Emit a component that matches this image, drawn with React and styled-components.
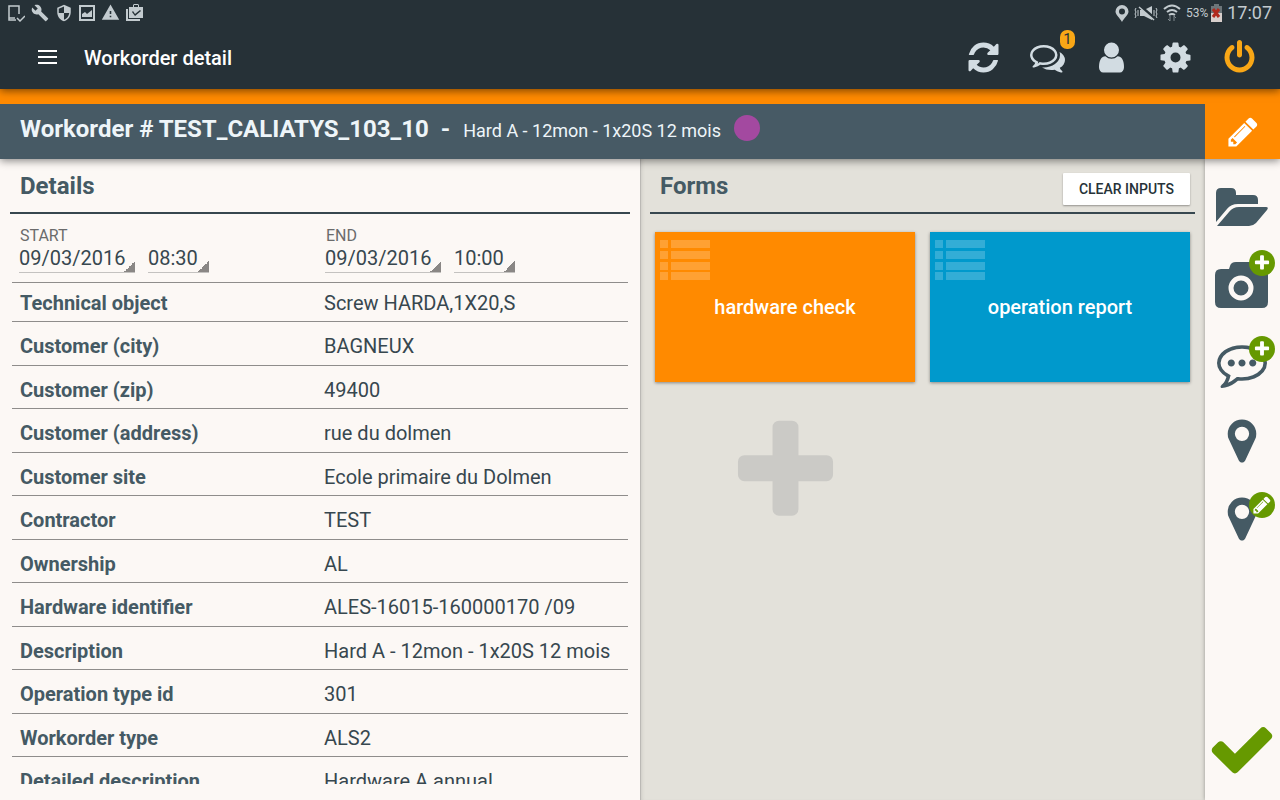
import React, { useState } from 'react';
import styled, { createGlobalStyle } from 'styled-components';
import { MdBuild, MdSecurity, MdWarning } from 'react-icons/md';

const GlobalStyle = createGlobalStyle`
  * {
    box-sizing: border-box;
  }

  body {
    margin: 0;
    background-color: #fcf8f5;
    color: #37474f;
    font-family: Roboto, 'Liberation Sans', sans-serif;
  }

  button, select {
    font-family: inherit;
  }
`

const Screen = styled.div`
  display: flex;
  flex-direction: column;
  height: 100vh;
`

const Header = styled.header`
  position: relative;
  z-index: 3;
  background-color: #263137;
  box-shadow: 0 2px 8px rgba(0, 0, 0, 0.5);
`

const StatusBar = styled.div`
  display: flex;
  align-items: center;
  justify-content: space-between;
  height: 25px;
  padding: 0 8px 0 6px;
  color: #c3cbcf;
`

const StatusGroup = styled.div`
  display: flex;
  align-items: center;
  gap: ${props => props.gap};
`

const Battery = styled.span`
  font-size: 12px;
  margin-right: -2px;
`

const Clock = styled.span`
  font-size: 18px;
  line-height: 25px;
`

const AppBar = styled.div`
  display: flex;
  align-items: center;
  height: 64px;
  padding: 0 9px 0 28px;
`

const AppTitle = styled.h1`
  flex: 1;
  margin: 0 0 0 16px;
  padding-top: 2px;
  color: #fff;
  font-size: 20px;
  font-weight: 500;
`

const IconButton = styled.button`
  position: relative;
  display: flex;
  align-items: center;
  justify-content: center;
  width: ${props => props.width || '64px'};
  height: 64px;
  padding: 0;
  border: none;
  background: none;
  color: ${props => props.color || '#d2dce2'};
  cursor: pointer;
`

const Count = styled.span`
  position: absolute;
  top: 5px;
  right: 4px;
  width: 15px;
  border-radius: 7px;
  background-color: #f9a716;
  color: #263137;
  font-size: 15px;
  line-height: 19px;
  text-align: center;
`

const TitleRow = styled.div`
  position: relative;
  z-index: 2;
  display: flex;
  padding-top: 15px;
  background-color: #ff8a00;
  box-shadow: 0 2px 8px rgba(0, 0, 0, 0.45);
`

const TitleBar = styled.div`
  flex: 1;
  display: flex;
  align-items: center;
  height: 55px;
  padding: 0 20px 5px;
  background-color: #475a65;
  color: #eef5f9;
`

const OrderNumber = styled.h2`
  margin: 0;
  font-size: 24px;
  font-weight: 700;
  white-space: pre;
`

const OrderName = styled.span`
  margin: 2px 13px 0;
  font-size: 18px;
`

const Dot = styled.span`
  width: 26px;
  height: 26px;
  margin-top: -2px;
  border-radius: 50%;
  background-color: #a349a0;
`

const EditButton = styled.button`
  display: flex;
  align-items: center;
  justify-content: center;
  width: 75px;
  padding: 0;
  border: none;
  background: none;
  color: #fff;
  cursor: pointer;
`

const Main = styled.main`
  flex: 1;
  display: flex;
  min-height: 0;
`

const Details = styled.section`
  flex: 0 0 50%;
  display: flex;
  flex-direction: column;
  padding: 0 10px 16px;
`

const Forms = styled.section`
  flex: 1;
  padding: 0 10px;
  background-color: #e3e1da;
  box-shadow: inset 1px 0 #bbb9b5, inset 4px 0 4px -3px rgba(0, 0, 0, 0.15);
`

const PanelHead = styled.div`
  display: flex;
  align-items: center;
  justify-content: space-between;
  height: 55px;
  padding: 0 5px 0 10px;
  border-bottom: 2px solid #37474f;
`

const PanelTitle = styled.h3`
  margin: 0;
  padding-top: 1px;
  color: #455a64;
  font-size: 24px;
  font-weight: 700;
`

const ClearButton = styled.button`
  height: 32px;
  margin-top: 6px;
  padding: 0 16px;
  border: none;
  border-radius: 1px;
  background-color: #fff;
  box-shadow: 0 1px 2px rgba(0, 0, 0, 0.35);
  color: #263238;
  font-size: 14px;
  font-weight: 500;
  cursor: pointer;
`

const Scroll = styled.div`
  flex: 1;
  min-height: 0;
  padding: 0 2px;
  overflow: hidden;
`

const Dates = styled.div`
  display: grid;
  grid-template-columns: 306px 1fr;
  height: 69px;
  padding: 12px 7px 0;
  border-bottom: 1px solid #8f8d8b;
`

const DateLabel = styled.label`
  display: block;
  padding-left: 1px;
  color: #6b6b6b;
  font-size: 16px;
  line-height: 20px;
`

const Pickers = styled.div`
  display: flex;
  gap: 13px;
`

const Picker = styled.select`
  appearance: none;
  width: ${props => props.width};
  height: 27px;
  padding: 0 0 5px;
  border: none;
  border-bottom: 1px solid #c4c2c0;
  border-radius: 0;
  outline: none;
  background: linear-gradient(135deg, transparent 50%, #8a8785 50%) right bottom / 12px 12px no-repeat border-box;
  color: #37474f;
  font-size: 20px;
`

const Table = styled.table`
  width: 100%;
  border-spacing: 0;
  table-layout: fixed;
`

const Name = styled.th`
  width: 304px;
  padding: 5px 8px 0;
  border-bottom: 1px solid #8f8d8b;
  color: #455a64;
  font-size: 20px;
  font-weight: 700;
  line-height: 24px;
  text-align: left;
`

const Value = styled.td`
  padding: 5px 8px 0;
  border-bottom: 1px solid #8f8d8b;
  font-size: 20px;
  line-height: 24px;
`

const Row = styled.tr`
  height: 43px;

  &:nth-child(even) {
    height: 44px;
  }

  &:first-child {
    height: 39px;
  }

  &:first-child > * {
    padding-top: 2px;
  }
`

const Tiles = styled.div`
  display: grid;
  grid-template-columns: 1fr 1fr;
  grid-auto-rows: 150px;
  gap: 15px;
  padding: 18px 5px;
`

const Tile = styled.button`
  position: relative;
  border: none;
  background-color: ${props => props.color};
  box-shadow: 0 1px 3px rgba(0, 0, 0, 0.4);
  color: #fff;
  font-size: 20px;
  font-weight: 500;
  cursor: pointer;
`

const TileIcon = styled.svg`
  position: absolute;
  top: 8px;
  left: 5px;
`

const AddButton = styled.button`
  display: flex;
  align-items: center;
  justify-content: center;
  padding: 0;
  border: none;
  background: none;
  color: #cbcac6;
  cursor: pointer;
`

const Rail = styled.nav`
  display: flex;
  flex-direction: column;
  width: 75px;
  padding: 9px 0 12px;
  box-shadow: 0 0 4px rgba(0, 0, 0, 0.35);
`

const RailButton = styled.button`
  position: relative;
  display: flex;
  align-items: center;
  justify-content: center;
  height: 78px;
  padding: 0 2px 0 0;
  border: none;
  background: none;
  color: ${props => props.color || '#455a64'};
  cursor: pointer;

  &:last-child {
    margin-top: auto;
  }
`

const Badge = styled.span`
  position: absolute;
  top: ${props => props.top};
  right: 5px;
  display: flex;
  align-items: center;
  justify-content: center;
  width: 26px;
  height: 26px;
  border-radius: 50%;
  background-color: #669900;
  color: #fff;
`

const paths = {
  refresh: 'M1639 1056q0 5-1 7-64 268-268 434.5t-478 166.5q-146 0-282.5-55t-243.5-157l-129 129q-19 19-45 19t-45-19-19-45v-448q0-26 19-45t45-19h448q26 0 45 19t19 45-19 45l-137 137q71 66 161 102t187 36q134 0 250-65t186-179q11-17 53-117 8-23 30-23h192q13 0 22.5 9.5t9.5 22.5zm25-800v448q0 26-19 45t-45 19h-448q-26 0-45-19t-19-45 19-45l138-138q-148-137-349-137-134 0-250 65t-186 179q-11 17-53 117-8 23-30 23h-199q-13 0-22.5-9.5t-9.5-22.5v-7q65-268 270-434.5t480-166.5q146 0 284 55.5t245 156.5l130-129q19-19 45-19t45 19 19 45z',
  comments: 'M704 384q-153 0-286 52t-211.5 141-78.5 191q0 82 53 158t149 132l97 56-35 84q34-20 62-39l44-31 53 10q78 14 153 14 153 0 286-52t211.5-141 78.5-191-78.5-191-211.5-141-286-52zm0-128q191 0 353.5 68.5t256.5 186.5 94 257-94 257-256.5 186.5-353.5 68.5q-86 0-176-16-124 88-278 128-36 9-86 16h-3q-11 0-20.5-8t-11.5-21q-1-3-1-6.5t.5-6.5 2-6l2.5-5 3.5-5.5 4-5 4.5-5 4-4.5q5-6 23-25t26-29.5 22.5-29 25-38.5 20.5-44q-124-72-195-177t-71-224q0-139 94-257t256.5-186.5 353.5-68.5zm822 1169q10 24 20.5 44t25 38.5 22.5 29 26 29.5 23 25q1 1 4 4.5t4.5 5 4 5 3.5 5.5l2.5 5 2 6 .5 6.5-1 6.5q-3 14-13 22t-22 7q-50-7-86-16-154-40-278-128-90 16-176 16-271 0-472-132 58 4 88 4 161 0 309-45t264-129q125-92 192-212t67-254q0-77-23-152 129 71 204 178t75 230q0 120-71 224.5t-195 176.5z',
  user: 'M1536 1399q0 109-62.5 187t-150.5 78h-854q-88 0-150.5-78t-62.5-187q0-85 8.5-160.5t31.5-152 58.5-131 94-89 134.5-34.5q131 128 313 128t313-128q76 0 134.5 34.5t94 89 58.5 131 31.5 152 8.5 160.5zm-256-887q0 159-112.5 271.5t-271.5 112.5-271.5-112.5-112.5-271.5 112.5-271.5 271.5-112.5 271.5 112.5 112.5 271.5z',
  cog: 'M1152 896q0-106-75-181t-181-75-181 75-75 181 75 181 181 75 181-75 75-181zm512-109v222q0 12-8 23t-20 13l-185 28q-19 54-39 91 35 50 107 138 10 12 10 25t-9 23q-27 37-99 108t-94 71q-12 0-26-9l-138-108q-44 23-91 38-16 136-29 186-7 28-36 28h-222q-14 0-24.5-8.5t-11.5-21.5l-28-184q-49-16-90-37l-141 107q-10 9-25 9-14 0-25-11-126-114-165-168-7-10-7-23 0-12 8-23 15-21 51-66.5t54-70.5q-27-50-41-99l-183-27q-13-2-21-12.5t-8-23.5v-222q0-12 8-23t19-13l186-28q14-46 39-92-40-57-107-138-10-12-10-24 0-10 9-23 26-36 98.5-107.5t94.5-71.5q13 0 26 10l138 107q44-23 91-38 16-136 29-186 7-28 36-28h222q14 0 24.5 8.5t11.5 21.5l28 184q49 16 90 37l142-107q9-9 24-9 13 0 25 10 129 119 165 170 7 8 7 22 0 12-8 23-15 21-51 66.5t-54 70.5q26 50 41 98l183 28q13 2 21 12.5t8 23.5z',
  power: 'M1664 896q0 156-61 298t-164 245-245 164-298 61-298-61-245-164-164-245-61-298q0-182 80.5-343t226.5-270q43-32 95.5-25t83.5 50q32 42 24.5 94.5t-49.5 84.5q-98 74-151.5 181t-53.5 228q0 104 40.5 198.5t109.5 163.5 163.5 109.5 198.5 40.5 198.5-40.5 163.5-109.5 109.5-163.5 40.5-198.5q0-121-53.5-228t-151.5-181q-42-32-49.5-84.5t24.5-94.5q31-43 84-50t95 25q146 109 226.5 270t80.5 343zm-640-768v640q0 52-38 90t-90 38-90-38-38-90v-640q0-52 38-90t90-38 90 38 38 90z',
  pencil: 'M491 1536l91-91-235-235-91 91v107h128v128h107zm523-928q0-22-22-22-10 0-17 7l-542 542q-7 7-7 17 0 22 22 22 10 0 17-7l542-542q7-7 7-17zm-54-192l416 416-832 832h-416v-416zm683 96q0 53-37 90l-166 166-416-416 166-165q36-38 90-38 53 0 91 38l235 234q37 39 37 91z',
  comment: 'M640 896q0 53-37.500 90.500t-90.500 37.500-90.500-37.500-37.500-90.500 37.500-90.500 90.500-37.500 90.500 37.500 37.500 90.500zm384 0q0 53-37.500 90.500t-90.500 37.500-90.500-37.500-37.500-90.500 37.500-90.500 90.500-37.500 90.500 37.500 37.500 90.500zm384 0q0 53-37.500 90.500t-90.500 37.500-90.500-37.500-37.500-90.500 37.500-90.500 90.500-37.500 90.500 37.500 37.500 90.500zM896 384q-204 0-381.5 69.5t-282 187.500-104.500 255q0 112 71.500 213.500t201.500 175.500l87 50-27 96q-24 91-70 172 152-63 275-171l43-38 57 6q69 8 130 8 204 0 381.500-69.500t282-187.500 104.500-255-104.500-255-282-187.500-381.500-69.500zm896 512q0 174-120 321.500t-326 233-450 85.500q-70 0-145-8-198 175-460 242-49 14-114 22h-5q-15 0-27-10.500t-16-27.500v-1q-3-4-.5-12t2-10 4.500-9.500l6-9 7-8.500 8-9q7-8 31-34.500t34.500-38 31-39.500 32.500-51 27-59 26-76q-157-89-247.500-220t-90.500-281q0-130 71-248.500t191-204.500 286-136.500 348-50.500 348 50.500 286 136.500 191 204.500 71 248.500z',
  marker: 'M1152 640q0-106-75-181t-181-75-181 75-75 181 75 181 181 75 181-75 75-181zm256 0q0 109-33 179l-364 774q-16 33-47.500 52t-67.500 19-67.500-19-46.500-52l-365-774q-33-70-33-179 0-212 150-362t362-150 362 150 150 362z',
  check: 'M1671 566q0 40-28 68l-724 724-136 136q-28 28-68 28t-68-28l-136-136-362-362q-28-28-28-68t28-68l136-136q28-28 68-28t68 28l294 295 656-657q28-28 68-28t68 28l136 136q28 28 28 68z',
  plus: 'M1600 736v192q0 40-28 68t-68 28h-416v416q0 40-28 68t-68 28h-192q-40 0-68-28t-28-68v-416h-416q-40 0-68-28t-28-68v-192q0-40 28-68t68-28h416v-416q0-40 28-68t68-28h192q40 0 68 28t28 68v416h416q40 0 68 28t28 68z',
}

const Glyph = ({name, size}) => (
  <svg width={size} height={size} viewBox="0 0 1792 1792" fill="currentColor" aria-hidden="true">
    <path d={paths[name]} />
  </svg>
)

const ListIcon = () => (
  <TileIcon width="51" height="41" fill="#fff" fillOpacity="0.2" aria-hidden="true">
    {[0, 11, 22, 32].map(y => (
      <g key={y}>
        <rect x="0" y={y} width="8" height="8" />
        <rect x="11" y={y} width="39" height="8" />
      </g>
    ))}
  </TileIcon>
)

const details = [
  ['Technical object', 'Screw HARDA,1X20,S'],
  ['Customer (city)', 'BAGNEUX'],
  ['Customer (zip)', '49400'],
  ['Customer (address)', 'rue du dolmen'],
  ['Customer site', 'Ecole primaire du Dolmen'],
  ['Contractor', 'TEST'],
  ['Ownership', 'AL'],
  ['Hardware identifier', 'ALES-16015-160000170 /09'],
  ['Description', 'Hard A - 12mon - 1x20S 12 mois'],
  ['Operation type id', '301'],
  ['Workorder type', 'ALS2'],
  ['Detailed description', 'Hardware A annual'],
]

const DateField = ({id, label, date, time}) => {
  const [day, setDay] = useState(date);
  const [hour, setHour] = useState(time);

  return (
    <div>
      <DateLabel htmlFor={id}>{label}</DateLabel>
      <Pickers>
        <Picker id={id} width="116px" value={day} onChange={(e) => setDay(e.target.value)}>
          <option>{date}</option>
        </Picker>
        <Picker aria-label={label} width="61px" value={hour} onChange={(e) => setHour(e.target.value)}>
          <option>{time}</option>
        </Picker>
      </Pickers>
    </div>
  )
}

const StatusIcons = () => (
  <StatusBar>
    <StatusGroup gap="6px">
      <svg width="19" height="18" fill="none" stroke="currentColor" strokeWidth="1.500">
        <path d="M13 10V2H3v14h7" />
        <path d="M3 14h6" />
        <path d="M11 14l3 3 5-5" />
      </svg>
      <MdBuild size={18} />
      <MdSecurity size={18} />
      <svg width="16" height="17" fill="currentColor">
        <path fillRule="evenodd" d="M0 1h16v16H0zM2 3v12h12V3z" />
        <path d="M3 13v-3l3-2 2 2 5-4v7z" />
      </svg>
      <MdWarning size={19} />
      <svg width="17" height="17" viewBox="0 0 17 17" fill="currentColor">
        <path d="M0 5h2v10h12v2H0z" />
        <path fillRule="evenodd" d="M3 3h4V1l1-1h4l1 1v2h4v11H3zM8 3h4V1H8zM6 8l3 4 6-5-1-1-5 4-2-3z" />
      </svg>
    </StatusGroup>
    <StatusGroup gap="5px">
      <svg width="14" height="18" viewBox="0 0 14 18" fill="currentColor">
        <path fillRule="evenodd" d="M7 1a6.500 6.500 0 0 1 6.500 6.500C13.500 11 9 14 7 18 5 14 .5 11 .5 7.500A6.500 6.500 0 0 1 7 1zm0 3.500a3 3 0 1 0 0 6 3 3 0 0 0 0-6z" />
      </svg>
      <svg width="24" height="16" viewBox="0 0 24 16" fill="currentColor">
        <path d="M6 5h4l8-4v14l-8-4H6z" />
        <path d="M5 0l15 13" stroke="#263137" strokeWidth="3" />
        <path d="M5 2l15 13" fill="none" stroke="currentColor" strokeWidth="1.500" />
        <path d="M2 3L1 5l1 2-1 2 1 2-1 2M4 5v6M22 3l1 2-1 2 1 2-1 2 1 2M20 5v6" fill="none" stroke="currentColor" strokeWidth="1" />
      </svg>
      <svg width="18" height="18" viewBox="0 0 18 18" fill="none" stroke="currentColor" strokeWidth="2">
        <path d="M1 5q8-7 16 0M4 8q5-4 10 0M6 11q3-2 6 0" />
        <path d="M7 17v-5M5 15l2 2M11 12v5M11 12l2 2" stroke="#7f898e" strokeWidth="1" />
      </svg>
      <Battery>53%</Battery>
      <svg width="11" height="18" viewBox="0 0 11 18">
        <path fill="#6c7579" d="M3 0h5v2h3v7H0V2h3z" />
        <path fill="#d8cfcc" d="M0 9h11v9H0z" />
        <path d="M2 5l6 8M8 5l-6 8" stroke="#b02a1d" strokeWidth="3" />
      </svg>
      <Clock>17:07</Clock>
    </StatusGroup>
  </StatusBar>
)

export default function App() {
  return (
    <Screen>
      <GlobalStyle />
      <Header>
        <StatusIcons />
        <AppBar>
          <IconButton width="40px" color="#fff" aria-label="Menu">
            <svg width="20" height="15" fill="currentColor">
              <path d="M0 0h19v2H0zM0 6h19v2H0zM0 12h19v2H0z" />
            </svg>
          </IconButton>
          <AppTitle>Workorder detail</AppTitle>
          <IconButton aria-label="Refresh"><Glyph name="refresh" size={35} /></IconButton>
          <IconButton aria-label="Messages">
            <Glyph name="comments" size={35} />
            <Count>1</Count>
          </IconButton>
          <IconButton aria-label="Account"><Glyph name="user" size={35} /></IconButton>
          <IconButton aria-label="Settings"><Glyph name="cog" size={35} /></IconButton>
          <IconButton color="#f9a716" aria-label="Log out"><Glyph name="power" size={35} /></IconButton>
        </AppBar>
      </Header>

      <TitleRow>
        <TitleBar>
          <OrderNumber>Workorder # TEST_CALIATYS_103_10  -</OrderNumber>
          <OrderName>Hard A - 12mon - 1x20S 12 mois</OrderName>
          <Dot />
        </TitleBar>
        <EditButton aria-label="Edit"><Glyph name="pencil" size={34} /></EditButton>
      </TitleRow>

      <Main>
        <Details>
          <PanelHead>
            <PanelTitle>Details</PanelTitle>
          </PanelHead>
          <Scroll>
            <Dates>
              <DateField id="start" label="START" date="09/03/2016" time="08:30" />
              <DateField id="end" label="END" date="09/03/2016" time="10:00" />
            </Dates>
            <Table>
              <tbody>
                {details.map(([name, value]) => (
                  <Row key={name}>
                    <Name scope="row">{name}</Name>
                    <Value>{value}</Value>
                  </Row>
                ))}
              </tbody>
            </Table>
          </Scroll>
        </Details>

        <Forms>
          <PanelHead>
            <PanelTitle>Forms</PanelTitle>
            <ClearButton>CLEAR INPUTS</ClearButton>
          </PanelHead>
          <Tiles>
            <Tile color="#ff8a00"><ListIcon />hardware check</Tile>
            <Tile color="#0099cc"><ListIcon />operation report</Tile>
            <AddButton aria-label="Add form"><Glyph name="plus" size={121} /></AddButton>
          </Tiles>
        </Forms>

        <Rail>
          <RailButton aria-label="Files">
            <svg width="54" height="40" viewBox="0 0 54 40" fill="currentColor">
              <path d="M1 35V6q0-5 5-5h10q5 0 5 5v2h17q5 0 5 5v4H23q-7 0-11 5z" />
              <path d="M2 39l12-14q4-5 10-5h27q3 0 1 3L41 36q-3 3-7 3z" />
            </svg>
          </RailButton>
          <RailButton aria-label="Add photo">
            <svg width="53" height="46" viewBox="0 0 53 46" fill="currentColor">
              <path d="M6 7h8l1-3q1-4 6-4h14q5 0 6 4l1 3h5q6 0 6 6v27q0 6-6 6H6q-6 0-6-6V13q0-6 6-6z" />
              <circle cx="26" cy="26" r="10" fill="none" stroke="#fcf8f5" strokeWidth="5" />
            </svg>
            <Badge top="4px"><Glyph name="plus" size={18} /></Badge>
          </RailButton>
          <RailButton aria-label="Add comment">
            <Glyph name="comment" size={50} />
            <Badge top="12px"><Glyph name="plus" size={18} /></Badge>
          </RailButton>
          <RailButton aria-label="Location"><Glyph name="marker" size={50} /></RailButton>
          <RailButton aria-label="Edit location">
            <Glyph name="marker" size={50} />
            <Badge top="12px"><Glyph name="pencil" size={20} /></Badge>
          </RailButton>
          <RailButton color="#669900" aria-label="Validate"><Glyph name="check" size={70} /></RailButton>
        </Rail>
      </Main>
    </Screen>
  )
}
